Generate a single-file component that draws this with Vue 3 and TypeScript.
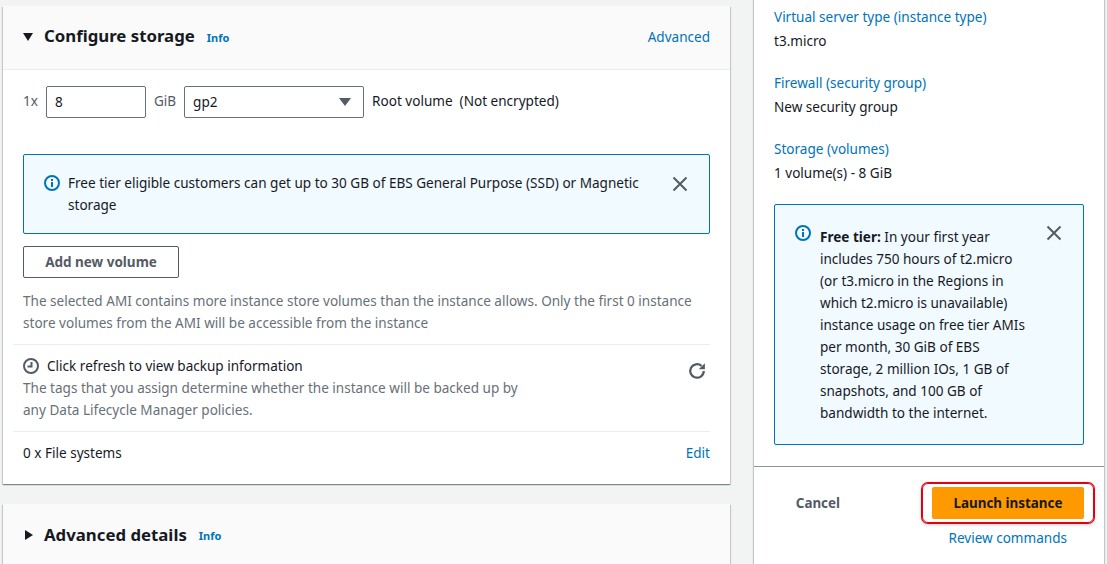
<template>
  <div class="page">
    <main class="main">
      <section class="card card--storage">
        <header class="card__head">
          <span class="caret caret--down"></span>
          <h2>Configure storage</h2>
          <a class="info">Info</a>
          <a class="link card__action">Advanced</a>
        </header>
        <div class="card__body">
          <div class="volume">
            <span>1x</span>
            <div class="field field--size">8</div>
            <span>GiB</span>
            <div class="field field--type">gp2<span class="select-arrow"></span></div>
            <span class="volume__note">Root volume&nbsp; (Not encrypted)</span>
          </div>
          <div class="alert alert--wide">
            <svg class="alert__icon" viewBox="0 0 16 16">
              <circle cx="8" cy="8" r="7" fill="none" stroke="#0073bb" stroke-width="2" />
              <rect x="7" y="7" width="2" height="5" fill="#0073bb" />
              <rect x="7" y="4" width="2" height="2" fill="#0073bb" />
            </svg>
            <p>{{ storageNotice }}</p>
            <svg class="alert__close" viewBox="0 0 16 16">
              <path d="M1.5 1.5l13 13M14.5 1.5l-13 13" fill="none" stroke="#545b64" stroke-width="2" />
            </svg>
          </div>
          <button class="btn-normal">Add new volume</button>
          <p class="muted ami-note">{{ amiNote }}</p>
        </div>
        <div class="row backup">
          <div class="backup__text">
            <div class="backup__title">
              <svg class="clock" viewBox="0 0 16 16">
                <circle cx="8" cy="8" r="7" fill="none" stroke="#545b64" stroke-width="2" />
                <path d="M8.5 4v4.5H4.5" fill="none" stroke="#545b64" stroke-width="2" />
              </svg>
              Click refresh to view backup information
            </div>
            <p class="muted">The tags that you assign determine whether the instance will be backed up by<br />any Data Lifecycle Manager policies.</p>
          </div>
          <svg class="refresh" viewBox="0 0 16 16">
            <path d="M14 8a6 6 0 1 1-2-4.5" fill="none" stroke="#545b64" stroke-width="2" />
            <path d="M15 1v5.5H9.5z" fill="#545b64" />
          </svg>
        </div>
        <div class="row files">
          <span>0 x File systems</span>
          <a class="link">Edit</a>
        </div>
      </section>
      <section class="card card--closed">
        <header class="card__head card__head--closed">
          <span class="caret caret--right"></span>
          <h2>Advanced details</h2>
          <a class="info">Info</a>
        </header>
      </section>
    </main>
    <aside class="summary">
      <div class="summary__scroll">
        <dl v-for="item in summary" :key="item.label" class="summary__item">
          <dt class="link">{{ item.label }}</dt>
          <dd>{{ item.value }}</dd>
        </dl>
        <div class="alert alert--side">
          <svg class="alert__icon" viewBox="0 0 16 16">
            <circle cx="8" cy="8" r="7" fill="none" stroke="#0073bb" stroke-width="2" />
            <rect x="7" y="7" width="2" height="5" fill="#0073bb" />
            <rect x="7" y="4" width="2" height="2" fill="#0073bb" />
          </svg>
          <p><b>Free tier:</b> {{ freeTier }}</p>
          <svg class="alert__close" viewBox="0 0 16 16">
            <path d="M1.5 1.5l13 13M14.5 1.5l-13 13" fill="none" stroke="#545b64" stroke-width="2" />
          </svg>
        </div>
      </div>
      <div class="summary__foot">
        <div class="actions">
          <button class="btn-cancel">Cancel</button>
          <div class="launch-ring">
            <button class="btn-primary">Launch instance</button>
          </div>
        </div>
        <a class="link review">Review commands</a>
      </div>
    </aside>
  </div>
</template>

<script setup lang="ts">
const storageNotice =
  'Free tier eligible customers can get up to 30 GB of EBS General Purpose (SSD) or Magnetic storage';
const amiNote =
  'The selected AMI contains more instance store volumes than the instance allows. Only the first 0 instance store volumes from the AMI will be accessible from the instance';
const freeTier =
  'In your first year includes 750 hours of t2.micro (or t3.micro in the Regions in which t2.micro is unavailable) instance usage on free tier AMIs per month, 30 GiB of EBS storage, 2 million IOs, 1 GB of snapshots, and 100 GB of bandwidth to the internet.';

const summary: { label: string; value: string }[] = [
  { label: 'Virtual server type (instance type)', value: 't3.micro' },
  { label: 'Firewall (security group)', value: 'New security group' },
  { label: 'Storage (volumes)', value: '1 volume(s) - 8 GiB' },
];
</script>

<style>
html,
body {
  margin: 0;
  background: #f2f3f3;
}
</style>

<style scoped>
.page {
  display: flex;
  height: 564px;
  overflow: hidden;
  background: #f2f3f3;
  color: #16191f;
  font-family: "Noto Sans", "Open Sans", sans-serif;
  font-size: 13.55px;
  line-height: 22px;
}
p,
h2,
dl,
dd {
  margin: 0;
}
.link {
  color: #0073bb;
}
.muted {
  color: #687078;
}
.main {
  display: flex;
  flex-direction: column;
  gap: 20px;
  flex: none;
  width: 727px;
  margin: 6px 0 0 3px;
}
.card {
  flex: none;
  background: #fff;
  box-shadow: 0 1px 1px 0 rgba(0, 28, 36, 0.3), 1px 1px 1px 0 rgba(0, 28, 36, 0.15), -1px 1px 1px 0 rgba(0, 28, 36, 0.15);
}
.card--storage {
  height: 478px;
}
.card--closed {
  height: 62px;
}
.card__head {
  display: flex;
  align-items: center;
  box-sizing: border-box;
  height: 64px;
  padding: 0 20px 2px;
  background: #fafafa;
  border-bottom: 1px solid #eaeded;
}
.card__head--closed {
  height: 62px;
  padding-bottom: 0;
  border-bottom: 0;
}
.card__head h2 {
  margin: 0 0 2px 11px;
  font-size: 16.8px;
  font-weight: 700;
}
.card__head--closed h2 {
  margin-bottom: 0;
}
.card__action {
  margin-left: auto;
}
.info {
  margin: 2px 0 0 12px;
  color: #0073bb;
  font-size: 11px;
  font-weight: 700;
}
.caret {
  width: 0;
  height: 0;
}
.caret--down {
  border-top: 8px solid #16191f;
  border-left: 5px solid transparent;
  border-right: 5px solid transparent;
}
.caret--right {
  margin-left: 2px;
  border-left: 8px solid #16191f;
  border-top: 5px solid transparent;
  border-bottom: 5px solid transparent;
}
.card__body {
  padding: 16px 20px 10px;
}
.volume {
  display: flex;
  align-items: center;
  gap: 8px;
  color: #545b64;
}
.volume > span {
  margin-bottom: 2px;
}
.field {
  box-sizing: border-box;
  position: relative;
  height: 32px;
  padding: 0 8px;
  border: 1px solid #687078;
  border-radius: 2px;
  color: #16191f;
  line-height: 30px;
}
.field--size {
  width: 100px;
}
.field--type {
  width: 180px;
}
.select-arrow {
  position: absolute;
  right: 12px;
  top: 11px;
  border-top: 8px solid #545b64;
  border-left: 6px solid transparent;
  border-right: 6px solid transparent;
}
.volume__note {
  color: #16191f;
}
.alert {
  display: flex;
  box-sizing: border-box;
  background: #f1faff;
  border: 1px solid #0073bb;
  border-radius: 2px;
}
.alert__icon {
  flex: none;
  width: 16px;
  height: 16px;
}
.alert__close {
  flex: none;
  width: 16px;
  height: 16px;
}
.alert p {
  flex: 1;
}
.alert--wide {
  gap: 8px;
  width: 687px;
  height: 80px;
  margin-top: 36px;
  padding: 17px 21px 0 20px;
}
.alert--wide .alert__icon {
  margin-top: 3px;
}
.alert--wide .alert__close {
  margin: 4px 0 0 16px;
}
.btn-normal {
  display: block;
  width: 156px;
  height: 32px;
  margin-top: 12px;
  padding: 0;
  border: 1px solid #545b64;
  border-radius: 2px;
  background: #fff;
  color: #545b64;
  font: 700 13.5px "Noto Sans", sans-serif;
}
.ami-note {
  margin-top: 12px;
}
.row {
  display: flex;
  justify-content: space-between;
  margin: 0 20px 0 10px;
  padding-left: 10px;
  border-top: 1px solid #eaeded;
}
.backup {
  box-sizing: border-box;
  height: 87px;
  padding-top: 10px;
}
.backup__title {
  display: flex;
  align-items: center;
  gap: 8px;
}
.clock {
  width: 16px;
  height: 16px;
}
.refresh {
  width: 18px;
  height: 18px;
  margin: 7px 4px 0 0;
}
.files {
  align-items: center;
  height: 42px;
}
.summary {
  display: flex;
  flex-direction: column;
  width: 350px;
  margin-left: 24px;
  background: #fff;
  box-shadow: 0 0 1px 1px rgba(0, 28, 36, 0.2);
}
.summary__scroll {
  box-sizing: border-box;
  height: 466px;
  padding: 6px 20px 0;
}
.summary__item {
  margin-bottom: 20px;
}
.summary__item dt {
  margin-bottom: 2px;
}
.alert--side {
  gap: 9px;
  width: 310px;
  height: 241px;
  padding: 21px 21px 0 20px;
}
.alert--side .alert__icon {
  margin-top: -1px;
}
.alert--side .alert__close {
  margin: -1px 0 0 7px;
}
.summary__foot {
  flex: 1;
  padding: 16px 10px 0 0;
  border-top: 1px solid #879596;
}
.actions {
  display: flex;
  align-items: center;
  justify-content: flex-end;
}
.btn-cancel {
  margin-right: 82px;
  padding: 0;
  border: 0;
  background: none;
  color: #545b64;
  font: 700 13.4px "Noto Sans", sans-serif;
}
.launch-ring {
  padding: 3px 9px;
  border: 1px solid #e3000f;
  border-radius: 6px;
  box-shadow: 0 0 0 1px #e3000f, 0 1px 4px rgba(0, 0, 0, 0.25);
}
.btn-primary {
  display: block;
  width: 152px;
  height: 32px;
  padding: 0;
  border: 0;
  border-radius: 2px;
  background: #ff9900;
  color: #16191f;
  font: 700 13.4px "Noto Sans", sans-serif;
}
.review {
  display: block;
  margin: 4px 27px 0 0;
  text-align: right;
}
</style>
